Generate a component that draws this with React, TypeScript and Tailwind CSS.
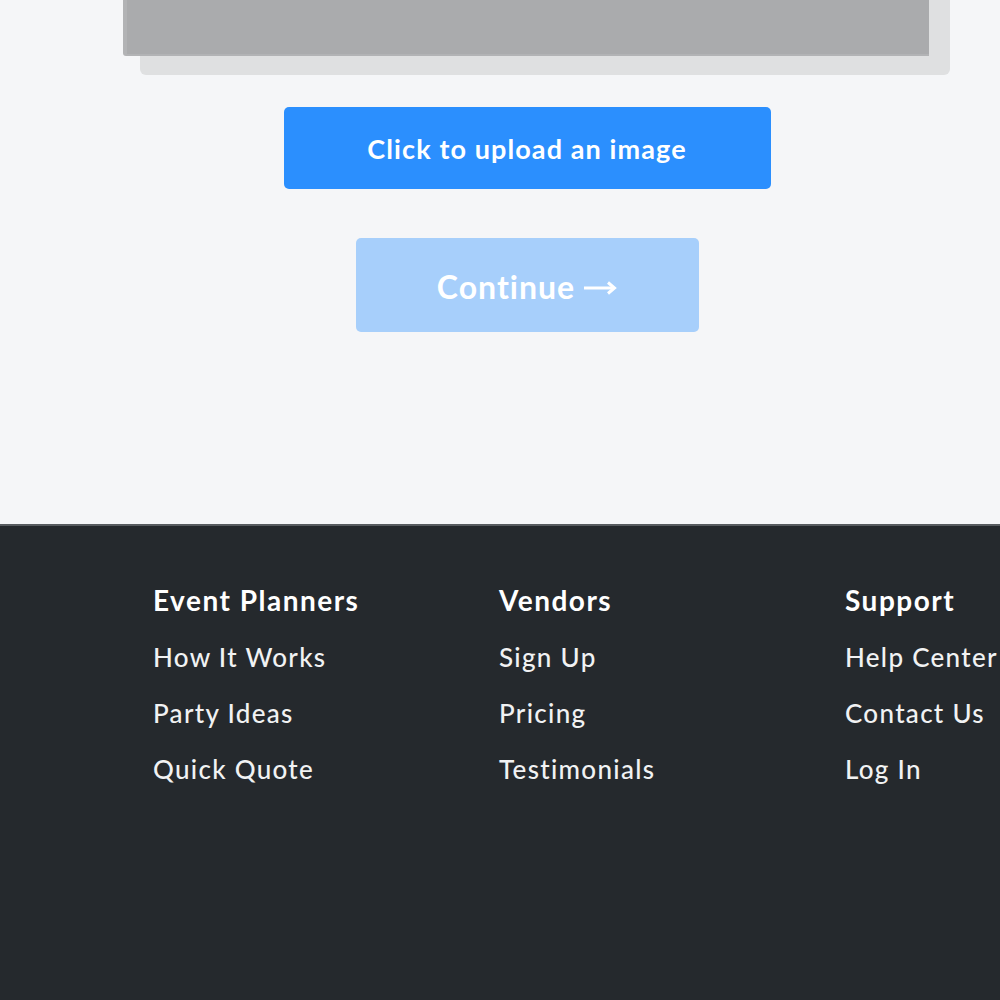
const columns = [
  { title: "Event Planners", links: ["How It Works", "Party Ideas", "Quick Quote"] },
  { title: "Vendors", links: ["Sign Up", "Pricing", "Testimonials"] },
  { title: "Support", links: ["Help Center", "Contact Us", "Log In"] },
];

const ArrowRight = () => (
  <svg width="34" height="16" viewBox="0 0 34 16" fill="none" className="ml-[8px] mt-[2px]">
    <path d="M1 8h30" stroke="white" strokeWidth="3" />
    <path d="M25 2.5L31.5 8L25 13.5" stroke="white" strokeWidth="3" strokeLinejoin="miter" />
  </svg>
);

const App = () => {
  return (
    <div className="w-[1000px] h-[1000px] overflow-hidden font-['Lato',sans-serif]">
      {/* Upload step */}
      <section className="h-[524px] bg-[#f5f6f8]">
        <div className="ml-[123px] w-[808px] flex flex-col items-center">
          {/* Image preview with stacked card behind it */}
          <div className="relative w-full">
            <div className="absolute left-[17px] top-0 w-[810px] h-[75px] rounded-b-[6px] bg-[#dfe0e1]" />
            <div className="relative w-[806px] h-[56px] bg-[#aaabad] border-l-[4px] border-b-[2px] border-[#b2b3b5] rounded-bl-[3px]" />
          </div>

          <button className="mt-[51px] w-[487px] h-[82px] pt-[3px] rounded-[5px] bg-[#2b8ffe] text-white text-[27px] font-bold tracking-[1.1px]">
            Click to upload an image
          </button>

          <button className="mt-[49px] w-[343px] h-[94px] pt-[3px] rounded-[5px] bg-[#a7cffb] text-white text-[32px] font-bold tracking-[1px] flex items-center justify-center">
            Continue
            <ArrowRight />
          </button>
        </div>
      </section>

      {/* Footer */}
      <footer className="h-[476px] bg-[#25292d] border-t-[2px] border-[#575b5f]">
        <div className="pl-[153px] pt-[58px] grid grid-cols-[346px_346px_346px]">
          {columns.map((col) => (
            <div key={col.title} className="flex flex-col">
              <h3 className="text-[28px] leading-[32px] font-bold tracking-[1.5px] text-white whitespace-nowrap">
                {col.title}
              </h3>
              <ul className="mt-[26px] flex flex-col gap-[26px]">
                {col.links.map((link) => (
                  <li key={link} className="text-[26px] leading-[30px] tracking-[1.3px] font-medium text-[#f1f2f3] whitespace-nowrap">
                    {link}
                  </li>
                ))}
              </ul>
            </div>
          ))}
        </div>
      </footer>
    </div>
  );
};

export default App;
